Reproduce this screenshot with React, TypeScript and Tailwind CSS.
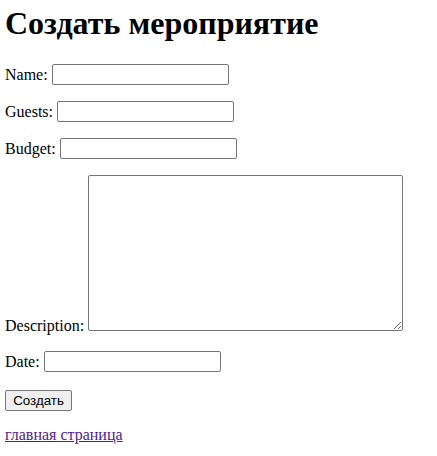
export default function App() {
  const inputCls =
    "w-[177px] h-[21px] border border-[#767676] rounded-[2px] bg-white px-[2px] text-[13.33px] font-['Liberation_Sans',sans-serif]";

  return (
    <div className="min-h-screen bg-white px-[5px] pt-[5px] text-black font-['Liberation_Serif',serif] text-[16px]">
      <h1 className="text-[32px] leading-[37px] font-bold">Создать мероприятие</h1>

      <form className="mt-[22px] flex flex-col gap-[16px]">
        <div className="flex items-center gap-[4px]">
          <label className="leading-[18px]">Name:</label>
          <input type="text" className={inputCls} />
        </div>
        <div className="flex items-center gap-[4px]">
          <label className="leading-[18px]">Guests:</label>
          <input type="text" className={inputCls} />
        </div>
        <div className="flex items-center gap-[4px]">
          <label className="leading-[18px]">Budget:</label>
          <input type="text" className={inputCls} />
        </div>
        <div className="flex items-end gap-[4px]">
          <label className="leading-[18px]">Description:</label>
          <textarea className="mb-[4px] w-[315px] h-[156px] border border-[#767676] rounded-[2px] bg-white resize" />
        </div>
        <div className="flex items-center gap-[4px]">
          <label className="leading-[18px]">Date:</label>
          <input type="text" className={inputCls} />
        </div>
        <div>
          <button
            type="button"
            className="w-[67px] h-[21px] border border-[#767676] rounded-[2px] bg-[#efefef] text-[13.33px] font-['Liberation_Sans',sans-serif]"
          >
            Создать
          </button>
        </div>
      </form>

      <div className="mt-[14px] leading-[18px]">
        <a href="#" className="text-[#551a8b] underline">
          главная страница
        </a>
      </div>
    </div>
  );
}
